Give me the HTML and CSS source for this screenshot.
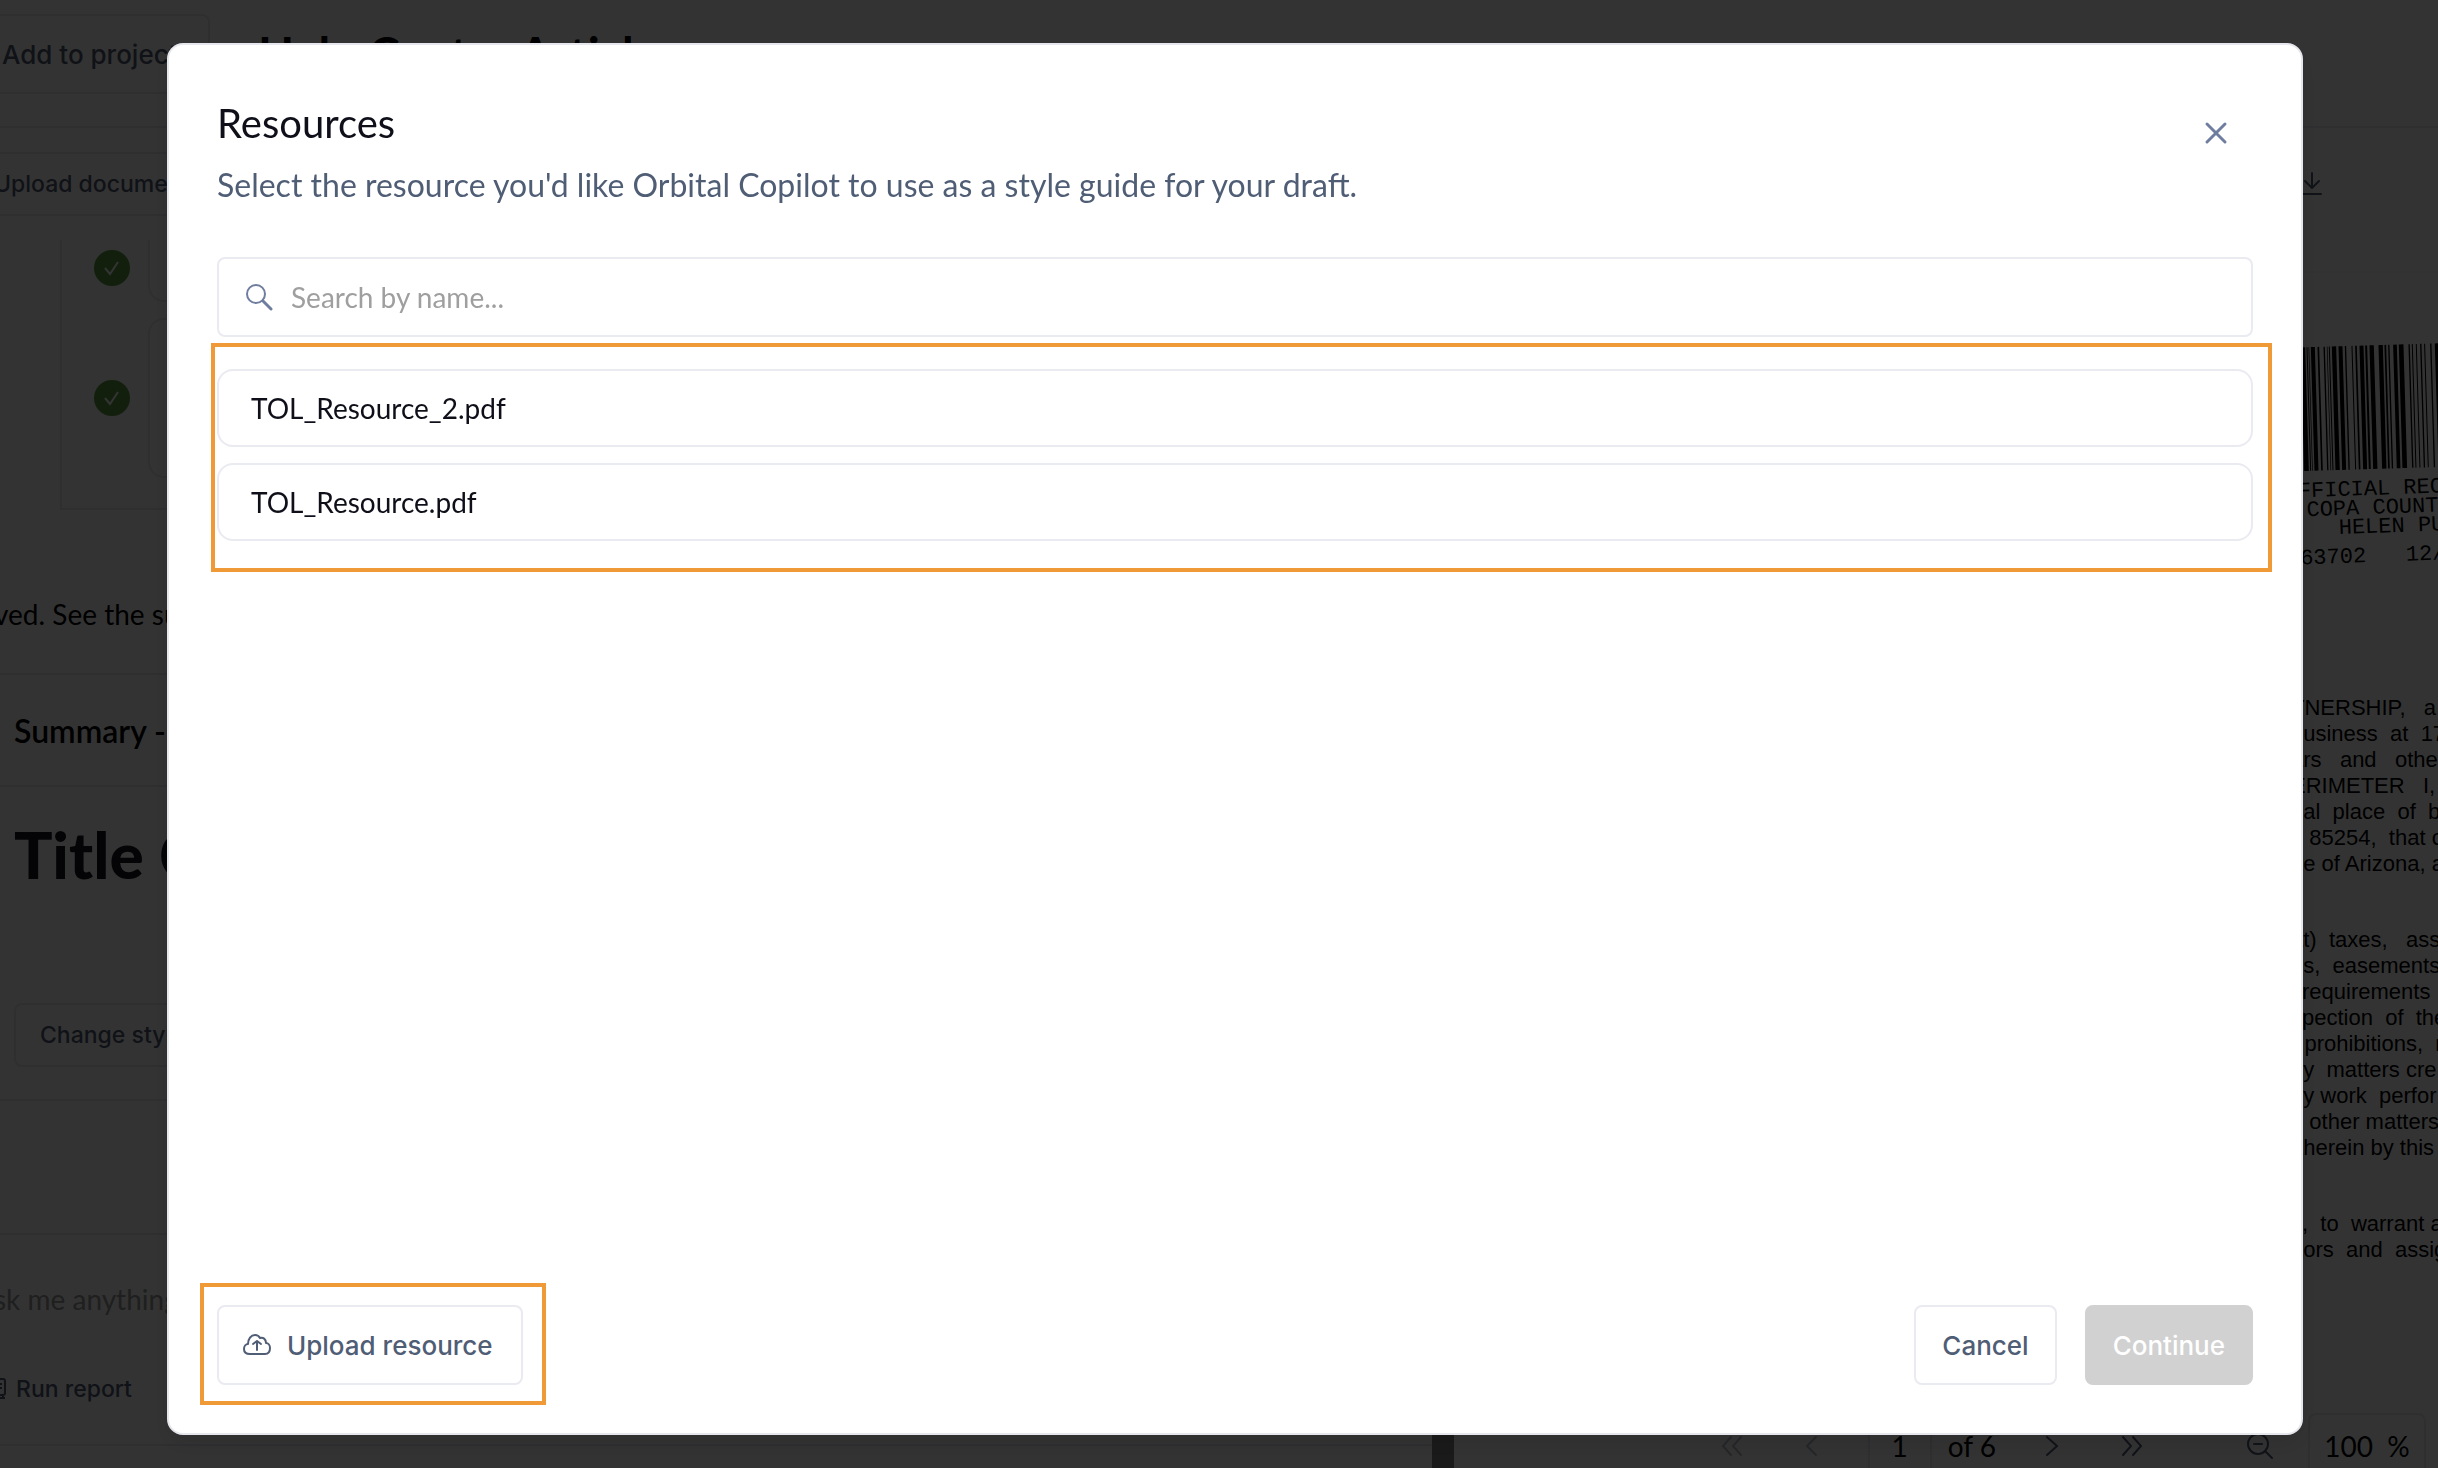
FILE: index.html
```html
<!DOCTYPE html>
<html lang="en">
<head>
    <meta charset="UTF-8">
    <title>Resources</title>
    <link rel="stylesheet" href="styles.css">
</head>
<body>
    <div class="app">
        <header class="app-header">
            <button class="btn add-btn">Add to project</button>
            <h1>Help Center Article</h1>
        </header>

        <div class="panes">
            <main class="chat-pane">
                <div class="toolbar">
                    <button class="btn small upload-doc">Upload documents</button>
                </div>
                <div class="steps">
                    <div class="step first">
                        <svg class="check" viewBox="0 0 36 36"><circle cx="18" cy="18" r="18" fill="#5c9a3c"/><path d="M11 18l5 6 8-12" fill="none" stroke="#fff" stroke-width="2"/></svg>
                        <div class="step-card"></div>
                    </div>
                    <div class="step second">
                        <svg class="check" viewBox="0 0 36 36"><circle cx="18" cy="18" r="18" fill="#5c9a3c"/><path d="M11 18l5 6 8-12" fill="none" stroke="#fff" stroke-width="2"/></svg>
                        <div class="step-card"></div>
                    </div>
                </div>
                <p class="message">ved. See the su</p>
                <h2 class="summary">Summary -</h2>
                <div class="draft">
                    <h3>Title C</h3>
                </div>
                <div class="style-row">
                    <button class="btn small">Change style</button>
                </div>
                <div class="ask">
                    <p class="ask-text">sk me anything</p>
                    <button class="run-btn">
                        <svg width="8" height="24" viewBox="0 0 8 24"><path d="M0 2h3q2 0 2 2v12q0 2-2 2H0M0 7h2M0 11h2M3 18v3M0 21h5" fill="none" stroke="#4f5d75" stroke-width="2"/></svg>
                        Run report
                    </button>
                </div>
            </main>

            <div class="splitter"></div>

            <section class="doc-pane">
                <div class="doc-toolbar">
                    <svg width="36" height="24" viewBox="0 0 36 24"><path d="M18 1v15M11 9l7 7 7-7M9 22h18" fill="none" stroke="#4f5d75" stroke-width="2" stroke-linecap="round" stroke-linejoin="round"/></svg>
                </div>
                <div class="doc-page">
                    <svg class="barcode" viewBox="0 0 405 414">
                        <g transform="rotate(-1.7)" fill="#000">
                            <path d="M-8 16h14v371h-14zM10 16h3v371h-3zM16 16h2v371h-2zM23 16h12v371h-12zM43 16h5v371h-5zM61 16h4v371h-4zM71 16h2v371h-2zM77 16h3v371h-3zM86 16h13v371h-13zM106 16h12v371h-12zM125 16h4v371h-4zM145 16h3v371h-3zM156 16h5v371h-5zM169 16h12v371h-12zM186 16h6v371h-6zM199 16h13v371h-13z"/>
                            <path d="M226 16h13v371h-13zM244 16h5v371h-5zM255 16h4v371h-4zM270 16h11v371h-11zM287 16h14v371h-14zM316 16h4v371h-4zM326 16h3v371h-3zM338 16h3v371h-3zM351 16h4v371h-4zM363 16h3v371h-3zM381 16h4v371h-4zM395 16h14v371h-14z"/>
                        </g>
                    </svg>
                    <div class="stamp">
                        <div>FFICIAL REC</div>
                        <div class="indent">COPA COUNTY</div>
                        <div>   HELEN PU</div>
                        <div class="stamp-number">63702   12/</div>
                    </div>
                    <p class="deed">TNERSHIP,   a
business  at  17
ars   and   other
ERIMETER   I,
pal  place  of  b
   85254,  that c
 te of Arizona, a</p>
                    <p class="deed">at)  taxes,   ass
ns,  easements
l requirements
spection  of  the
r prohibitions,  r
ny  matters cre
ny work  perfor
n other matters
 therein by this</p>
                    <p class="deed">s,  to  warrant a
 tors  and  assign</p>
                </div>
                <div class="pager">
                    <button class="page-btn faded" aria-label="First page"><svg width="24" height="24" viewBox="0 0 24 24"><path d="M11 3l-8 9 8 9M21 3l-8 9 8 9"/></svg></button>
                    <button class="page-btn faded" aria-label="Previous page"><svg width="24" height="24" viewBox="0 0 24 24"><path d="M16 3l-9 9 9 9"/></svg></button>
                    <input class="page-input" type="text" value="1" aria-label="Page">
                    <span class="page-total">of 6</span>
                    <button class="page-btn" aria-label="Next page"><svg width="24" height="24" viewBox="0 0 24 24"><path d="M7 3l10 9-10 9"/></svg></button>
                    <button class="page-btn" aria-label="Last page"><svg width="24" height="24" viewBox="0 0 24 24"><path d="M3 3l8 9-8 9M13 3l8 9-8 9"/></svg></button>
                    <button class="page-btn zoom-btn" aria-label="Zoom out"><svg width="28" height="28" viewBox="0 0 28 28"><circle cx="12" cy="12" r="10"/><path d="M19 19l7 7M8 12h8"/></svg></button>
                    <div class="zoom-level">100&nbsp; %</div>
                </div>
            </section>
        </div>
    </div>

    <div class="overlay">
        <div class="modal" role="dialog" aria-labelledby="modalTitle">
            <div class="modal-header">
                <div>
                    <h2 id="modalTitle">Resources</h2>
                    <p>Select the resource you'd like Orbital Copilot to use as a style guide for your draft.</p>
                </div>
                <button class="close-btn" aria-label="Close">
                    <svg width="24" height="24" viewBox="0 0 24 24"><path d="M3 3l18 18M21 3L3 21" fill="none" stroke="#6f7d9f" stroke-width="3" stroke-linecap="round"/></svg>
                </button>
            </div>

            <label class="search">
                <svg width="28" height="28" viewBox="0 0 28 28"><circle cx="11" cy="11" r="9" fill="none" stroke="#6f7d9f" stroke-width="2"/><path d="M18 18l8 8" stroke="#6f7d9f" stroke-width="3" stroke-linecap="round"/></svg>
                <input type="text" placeholder="Search by name..." aria-label="Search by name">
            </label>

            <div class="resource-list highlight">
                <button class="resource">TOL_Resource_2.pdf</button>
                <button class="resource">TOL_Resource.pdf</button>
            </div>

            <div class="modal-footer">
                <div class="upload highlight">
                    <button class="btn">
                        <svg width="28" height="22" viewBox="0 0 28 22" fill="none" stroke="#4f5d75" stroke-width="2" stroke-linecap="round" stroke-linejoin="round"><path d="M7 20C3 20 1 18 1 15c0-3 2-5 4-5C5 5 8 1 12 1c2 0 4 1 5 3 3-1 6 1 6 5 2 0 4 2 4 5 0 4-2 6-5 6z"/><path d="M14 16V7M10 10l4-3 4 3"/></svg>
                        Upload resource
                    </button>
                </div>
                <div class="actions">
                    <button class="btn">Cancel</button>
                    <button class="btn primary" disabled>Continue</button>
                </div>
            </div>
        </div>
    </div>
</body>
</html>
```
FILE: styles.css
```css
* {
    box-sizing: border-box;
}
body {
    margin: 0;
    font-family: Lato, sans-serif;
    font-size: 28px;
    color: #000;
    overflow: hidden;
}
h1, h2, h3, p {
    margin: 0;
}
button, input {
    font-family: inherit;
    font-size: inherit;
    color: inherit;
}
button {
    background: none;
    border: none;
    padding: 0;
    cursor: pointer;
}
.btn {
    display: flex;
    align-items: center;
    gap: 16px;
    height: 80px;
    padding: 0 24px;
    background: #fff;
    border: 2px solid #eaeaf1;
    border-radius: 8px;
    font-family: Inter, sans-serif;
    font-size: 26px;
    font-weight: 500;
    color: #4f5d75;
    white-space: nowrap;
}
.btn.small {
    height: 64px;
    font-size: 23px;
}
.btn.primary {
    background: #d1d1d1;
    border-color: #d1d1d1;
    color: #fff;
}

/* page behind the dialog */
.app {
    display: flex;
    flex-direction: column;
    height: 100vh;
    background: #fff;
}
.app-header {
    display: flex;
    align-items: center;
    gap: 48px;
    height: 128px;
    padding-bottom: 18px;
    border-bottom: 2px solid #eaeaf1;
}
.app-header .add-btn {
    width: 210px;
    padding: 0;
    border-left: none;
    border-radius: 0 8px 8px 0;
    text-indent: 2px;
}
.app-header h1 {
    font-size: 47px;
    font-weight: 700;
}
.panes {
    display: flex;
    flex: 1;
    min-height: 0;
}
.chat-pane {
    width: 1432px;
    margin-bottom: 22px;
    overflow: hidden;
    border-bottom: 2px solid #eaeaf1;
}
.toolbar {
    height: 112px;
    padding-top: 24px;
}
.toolbar .upload-doc {
    margin-left: -32px;
}
.steps {
    display: flex;
    flex-direction: column;
    gap: 16px;
    height: 270px;
    margin-left: 60px;
    padding-bottom: 30px;
    background: #fcfcfd;
    border: 2px solid #eaeaf1;
    border-top: none;
}
.step {
    display: flex;
    gap: 18px;
    padding-left: 32px;
}
.step.first {
    height: 62px;
}
.step.second {
    flex: 1;
}
.check {
    width: 36px;
    height: 36px;
    margin-top: 10px;
}
.second .check {
    margin-top: 62px;
}
.step-card {
    flex: 1;
    background: #fff;
    border: 2px solid #eaeaf1;
    border-radius: 16px;
}
.first .step-card {
    border-top: none;
    border-radius: 0 0 16px 16px;
}
.message {
    height: 165px;
    margin-left: -6px;
    padding-top: 88px;
    line-height: 32px;
    border-bottom: 2px solid #eaeaf1;
}
.summary {
    height: 112px;
    padding-left: 14px;
    font-size: 32px;
    font-weight: 600;
    line-height: 112px;
    border-bottom: 2px solid #eaeaf1;
}
.draft {
    height: 193px;
    padding: 28px 14px;
}
.draft h3 {
    font-size: 64px;
    font-weight: 900;
    line-height: 80px;
    color: #14161f;
}
.style-row {
    height: 121px;
    padding: 23px 14px;
    border-bottom: 2px solid #eaeaf1;
}
.ask {
    margin-top: 132px;
    border-top: 2px solid #eaeaf1;
}
.ask-text {
    margin-left: -6px;
    padding-top: 48px;
    line-height: 32px;
    color: #9b9b9b;
}
.run-btn {
    display: flex;
    align-items: center;
    gap: 8px;
    margin-top: 58px;
    font-family: Inter, sans-serif;
    font-size: 23px;
    font-weight: 500;
    line-height: 32px;
    color: #4f5d75;
}
.splitter {
    width: 22px;
    background: #808080;
}
.doc-pane {
    display: flex;
    flex-direction: column;
    flex: 1;
    min-width: 0;
}
.doc-toolbar {
    display: flex;
    justify-content: flex-end;
    height: 145px;
    padding: 44px 108px 0 0;
    border-bottom: 2px solid #f8f8fa;
}
.doc-page {
    flex: 1;
    min-height: 0;
    width: 147px;
    margin-left: auto;
    padding-top: 69px;
    overflow: hidden;
}
.barcode {
    display: block;
    width: 135px;
    height: 138px;
    margin-left: 12px;
    overflow: visible;
}
.stamp {
    margin-left: 8px;
    font-family: "Liberation Mono", monospace;
    font-size: 22px;
    line-height: 19px;
    transform: rotate(-2deg);
}
.stamp div {
    white-space: pre;
}
.stamp .indent {
    padding-left: 8px;
}
.stamp-number {
    margin-top: 10px;
}
.deed {
    margin-top: 50px;
    font-family: "Liberation Sans", sans-serif;
    font-size: 22px;
    line-height: 26px;
    white-space: pre;
}
.stamp + .deed {
    margin-top: 129px;
}
.pager {
    display: flex;
    align-items: center;
    justify-content: flex-end;
    height: 68px;
    padding-right: 12px;
    padding-top: 24px;
}
.page-btn {
    display: flex;
    justify-content: center;
    width: 80px;
}
.page-btn svg {
    fill: none;
    stroke: #4f5d75;
    stroke-width: 2;
    stroke-linecap: round;
}
.page-btn.faded {
    opacity: 0.4;
}
.page-input {
    width: 64px;
    height: 66px;
    margin: 0 16px;
    padding: 0;
    border: 2px solid #eaeaf1;
    border-radius: 8px;
    text-align: center;
}
.page-total {
    margin-right: 16px;
}
.zoom-btn {
    margin-left: 48px;
}
.zoom-level {
    width: 118px;
    height: 66px;
    margin-left: 8px;
    border: 2px solid #eaeaf1;
    border-radius: 8px;
    line-height: 62px;
    text-align: center;
}

/* dialog */
.overlay {
    position: fixed;
    inset: 0;
    display: flex;
    padding: 43px 135px 33px 167px;
    background: rgba(0, 0, 0, 0.8);
}
.modal {
    display: flex;
    flex-direction: column;
    flex: 1;
    padding: 48px;
    background: #fff;
    border: 2px solid #e6e6ed;
    border-radius: 16px;
    box-shadow: 0 10px 24px rgba(0, 0, 0, 0.1);
}
.modal-header {
    display: flex;
    justify-content: space-between;
}
.modal-header h2 {
    margin-top: 2px;
    font-size: 40px;
    font-weight: 400;
    line-height: 56px;
    color: #0e0f19;
}
.modal-header p {
    margin-top: 14px;
    font-size: 32px;
    line-height: 40px;
    color: #4f5d75;
}
.close-btn {
    height: 24px;
    margin: 28px 25px 0 0;
}
.close-btn svg {
    display: block;
}
.search {
    display: flex;
    align-items: center;
    gap: 18px;
    height: 80px;
    margin-top: 52px;
    padding: 0 26px;
    border: 2px solid #eaeaf1;
    border-radius: 8px;
}
.search input {
    flex: 1;
    padding: 0;
    border: none;
    outline: none;
}
.search input::placeholder {
    color: #9f9f9f;
}
/* orange callout frame */
.highlight {
    position: relative;
}
.highlight::after {
    content: "";
    position: absolute;
    border: 4px solid #f09937;
    pointer-events: none;
}
.resource-list {
    display: flex;
    flex-direction: column;
    gap: 16px;
    margin-top: 32px;
}
.resource-list::after {
    inset: -26px -19px -31px -6px;
}
.resource {
    height: 78px;
    padding: 0 32px;
    border: 2px solid #eaeaf1;
    border-radius: 16px;
    text-align: left;
    color: #0e0f19;
}
.modal-footer {
    display: flex;
    justify-content: space-between;
    margin-top: auto;
}
.upload .btn {
    padding-right: 28px;
}
.upload::after {
    inset: -22px -23px -20px -17px;
}
.actions {
    display: flex;
    gap: 28px;
}
.actions .btn {
    padding: 0 26px;
}
```
